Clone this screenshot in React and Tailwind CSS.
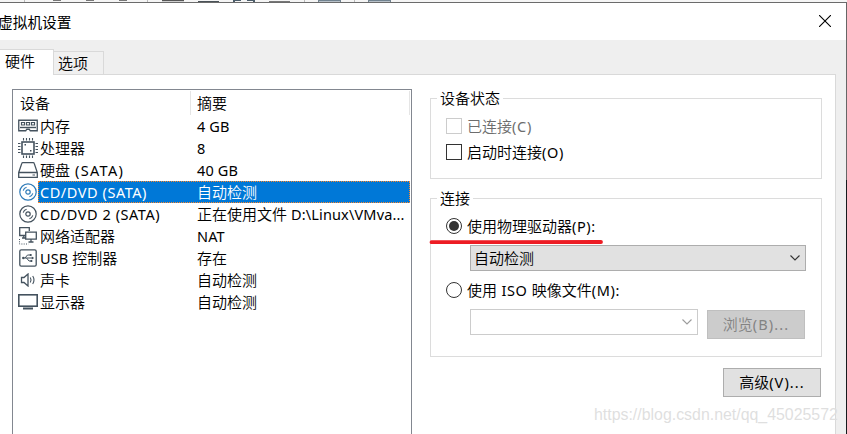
import React from "react";

const INK = "#44525e";

function MemoryIcon() {
  return (
    <svg width="20" height="14" viewBox="0 0 20 14" fill="none" stroke={INK} className="block">
      <path d="M.75 1.25h18.5v10.5h-7l-1-1.5h-2.5l-1 1.5h-7z" strokeWidth="1.3" />
      <path d="M3.5 3.5h3v2.5h-3zM8.5 3.5h3v2.5h-3zM13.5 3.5h3v2.5h-3z" strokeWidth="1.2" />
      <path d="M2 8.5h16" strokeWidth="1.4" />
    </svg>
  );
}

function CpuIcon() {
  return (
    <svg width="20" height="20" viewBox="0 0 20 20" fill="none" stroke={INK} className="block">
      <rect x="4" y="4" width="12" height="12" strokeWidth="1.6" />
      <path d="M5.5 0v2.5M8.5 0v2.5M11.5 0v2.5M14.5 0v2.5M5.5 17.5v2.5M8.5 17.5v2.5M11.5 17.5v2.5M14.5 17.5v2.5M0 5.5h2.5M0 8.5h2.5M0 11.5h2.5M0 14.5h2.5M17.5 5.5h2.5M17.5 8.5h2.5M17.5 11.5h2.5M17.5 14.5h2.5" strokeWidth="1.1" />
      <path d="M6.5 6h1.5v1.5h-1.5zM12 12h1.5v1.5H12z" fill={INK} stroke="none" />
    </svg>
  );
}

function DiskIcon() {
  return (
    <svg width="20" height="16" viewBox="0 0 20 16" fill="none" stroke={INK} strokeWidth="1.3" className="block">
      <path d="M.7 10.5 3.8 1.4Q4 .7 4.8.7h10.4q.8 0 1 .7l3.1 9.1v4.8H.7zM1 10.5h18" />
      <path d="M14.5 13H17" strokeWidth="1" />
    </svg>
  );
}

function DiscIcon({ color = INK }) {
  return (
    <svg width="18" height="18" viewBox="0 0 18 18" fill="none" stroke={color} className="block">
      <circle cx="9" cy="9" r="8.2" strokeWidth="1.2" />
      <circle cx="9" cy="9" r="2.2" strokeWidth="1.2" />
      <path d="M4.2 7.6A5 5 0 0 1 7.6 4.2M13.8 10.4A5 5 0 0 1 10.4 13.8" strokeWidth="1.1" />
    </svg>
  );
}

function NetworkIcon() {
  return (
    <svg width="18" height="18" viewBox="0 0 18 18" fill="none" stroke={INK} className="block">
      <path d="M6 8.5H.7V.7h9.6V4M3 11h4M4.8 8.5V11" strokeWidth="1.3" />
      <path d="M6.7 5.2h10.6v7H6.7zM12 12.2V15M9.5 15h5" strokeWidth="1.3" />
      <path d="M.5 12v5h9" strokeWidth="1" strokeDasharray="1 1.3" />
    </svg>
  );
}

function UsbIcon() {
  return (
    <svg width="18" height="18" viewBox="0 0 18 18" fill="none" stroke={INK} className="block">
      <rect x=".8" y=".8" width="16.4" height="16.4" rx="1.4" strokeWidth="1.3" />
      <path d="M4 9h9.5M6 9l2.5-3h2.5M7.5 9l2.5 3h2" strokeWidth="1" />
      <circle cx="4.3" cy="9" r="1.2" fill={INK} stroke="none" />
      <path d="M12.8 7.5 15.2 9l-2.4 1.5zM10.8 5.1h1.8v1.8h-1.8zM11.5 11.1h1.8v1.8h-1.8z" fill={INK} stroke="none" />
    </svg>
  );
}

function SoundIcon() {
  return (
    <svg width="16" height="14" viewBox="0 0 16 14" fill="none" stroke={INK} strokeWidth="1.3" className="block">
      <path d="M1.5 4.5H4L8 1v12L4 9.5H1.5z" />
      <path d="M10.3 4.5q1.5 2.5 0 5M12.7 3q2.6 4 0 8" strokeWidth="1.1" />
    </svg>
  );
}

function DisplayIcon() {
  return (
    <svg width="20" height="16" viewBox="0 0 20 16" fill="none" stroke={INK} className="block">
      <rect x=".8" y=".8" width="18.4" height="11.4" strokeWidth="1.6" />
      <path d="M5 14.5h10" strokeWidth="2" />
    </svg>
  );
}

const devices = [
  { icon: <MemoryIcon />, name: "内存", summary: "4 GB" },
  { icon: <CpuIcon />, name: "处理器", summary: "8" },
  { icon: <DiskIcon />, name: "硬盘 (SATA)", summary: "40 GB", spacing: "tracking-[1.3px]" },
  { icon: <DiscIcon color="#2f7bb8" />, name: "CD/DVD (SATA)", summary: "自动检测", selected: true, spacing: "tracking-[0.55px]" },
  { icon: <DiscIcon />, name: "CD/DVD 2 (SATA)", summary: "正在使用文件 D:\\Linux\\VMva...", spacing: "tracking-[0.55px]" },
  { icon: <NetworkIcon />, name: "网络适配器", summary: "NAT" },
  { icon: <UsbIcon />, name: "USB 控制器", summary: "存在" },
  { icon: <SoundIcon />, name: "声卡", summary: "自动检测" },
  { icon: <DisplayIcon />, name: "显示器", summary: "自动检测" },
];

// Latin runs are set slightly smaller than the Chinese text around them.
function Label({ children, spacing = "tracking-[0.15px]" }) {
  return children.split(/([\x20-\x7e]+)/).filter(Boolean).map((part, i) =>
    /^[\x20-\x7e]+$/.test(part) ? (
      <span key={i} className={"whitespace-pre text-[14.5px] font-normal " + spacing}>{part}</span>
    ) : (
      <span key={i}>{part}</span>
    )
  );
}

function DeviceRow({ icon, name, summary, selected, spacing }) {
  return (
    <div className="flex h-[22px] w-[397px]">
      <div className="flex w-[25px] items-center justify-center pl-[5px]">{icon}</div>
      <div
        className={
          selected
            ? "flex flex-1 items-center border border-dotted border-[#ff8728] bg-[#0078d7] pl-px text-white"
            : "flex flex-1 items-center pl-0.5"
        }
      >
        <div className="w-[157px] whitespace-nowrap"><Label spacing={spacing}>{name}</Label></div>
        <div className="whitespace-nowrap"><Label>{summary}</Label></div>
      </div>
    </div>
  );
}

function Chevron({ color }) {
  return (
    <svg width="10" height="6" viewBox="0 0 10 6" fill="none" stroke={color} strokeWidth="1.1" className="block">
      <path d="M.5.5 5 5 9.5.5" />
    </svg>
  );
}

function Radio({ checked }) {
  return (
    <span className="flex size-4 shrink-0 items-center justify-center rounded-full border border-[#333] bg-white">
      {checked && <span className="size-2.5 rounded-full bg-[#333]" />}
    </span>
  );
}

function Group({ title, className, children }) {
  return (
    <section className={"w-[392px] border border-[#dcdcdc] " + className}>
      <h2 className="-mt-[11px] ml-1.5 flex h-[22px] w-fit items-center bg-white px-[3px] pb-0.5 leading-none">{title}</h2>
      {children}
    </section>
  );
}

export default function App() {
  return (
    <div className="relative flex h-[434px] w-[847px] flex-col overflow-hidden bg-[#efefef] font-['Noto_Sans','Noto_Sans_CJK_SC',sans-serif] text-[15px] font-[350] leading-[20px] text-black">
      <div className="flex h-[3px] shrink-0 border-b border-[#6b6b6b] bg-[#f5f5f5]">
        <span className="ml-6 h-0.5 w-px bg-[#bbb]" />
        <span className="ml-7 h-px w-2 bg-[#777]" />
        <span className="ml-[25px] h-px w-2 bg-[#777]" />
        <span className="ml-[25px] h-px w-2 bg-[#777]" />
        <span className="ml-[20px] h-0.5 w-px bg-[#bbb]" />
        <span className="ml-3.5 h-0.5 w-[22px] border-t border-[#565656] bg-[#cfcfcf]" />
        <span className="ml-3.5 mt-px h-px w-[21px] bg-[#4a5258]" />
        <span className="ml-3.5 h-0.5 w-2 border-l-2 border-t border-[#4b5c69]" />
        <span className="ml-1.5 h-0.5 w-2 border-r-2 border-t border-[#4b5c69]" />
        <span className="ml-3.5 mt-px h-px w-[21px] bg-[#777]" />
        <span className="ml-3.5 h-0.5 w-px bg-[#bbb]" />
        <span className="ml-[13px] h-0.5 w-[23px] border-x border-t border-[#71828f] bg-[#b8c1c9]" />
        <span className="ml-[13px] h-0.5 w-px bg-[#bbb]" />
        <span className="ml-[13px] h-0.5 w-[23px] border-x border-t border-[#71828f] bg-[#b8c1c9]" />
      </div>

      <div className="flex min-h-0 flex-1">
        <div className="flex min-w-0 flex-1 flex-col">
          <header className="flex h-[37px] shrink-0 items-center justify-between bg-white pr-[15px]">
            <h1 className="-ml-0.5 text-[14.7px] font-normal">虚拟机设置</h1>
            <svg width="12" height="12" viewBox="0 0 12 12" stroke="#000" strokeWidth="1.1" className="-mt-0.5 block">
              <path d="m0 0 12 12M12 0 0 12" />
            </svg>
          </header>

          <nav className="flex h-[34px] shrink-0 items-end">
            <div className="z-10 -mb-px flex h-[26px] w-[54px] border-r border-t border-[#d9d9d9] bg-white pl-[5px] pt-px">硬件</div>
            <div className="flex h-[23px] w-[50px] border-r border-t border-[#d9d9d9] bg-[#f0f0f0] pl-1 pt-px">选项</div>
          </nav>

          <main className="mr-[10px] flex min-h-0 flex-1 border-r border-t border-[#d9d9d9] bg-white">
            <div className="ml-3 mt-[14px] w-[400px] shrink-0 border-x border-t border-[#828790]">
              <div className="flex h-[25px] pt-px">
                <div className="flex w-[178px] items-center border-r border-[#e5e5e5] pb-px pl-[7px]">设备</div>
                <div className="flex w-[219px] items-center border-r border-[#e5e5e5] pb-px pl-1.5">摘要</div>
              </div>
              {devices.map((d) => (
                <DeviceRow key={d.name} {...d} />
              ))}
            </div>

            <div className="ml-[18px] flex w-[392px] shrink-0 flex-col">
              <Group title="设备状态" className="mt-[23px] h-[81px]">
                <div className="mt-[5px] flex h-[22px] items-center gap-[5px] pl-[15px] text-[#6d6d6d]">
                  <span className="size-4 border border-[#ccc]" />
                  <span><Label spacing="tracking-[0.7px]">已连接(C)</Label></span>
                </div>
                <div className="mt-1 flex h-[22px] items-center gap-[5px] pl-[15px]">
                  <span className="size-4 border border-[#333]" />
                  <span><Label spacing="tracking-[0.6px]">启动时连接(O)</Label></span>
                </div>
              </Group>

              <Group title="连接" className="mt-[19px] h-[159px]">
                <div className="relative mt-[5px] flex h-[22px] items-center gap-[5px] pl-[15px]">
                  <Radio checked />
                  <span><Label spacing="tracking-[0.6px]">使用物理驱动器(P):</Label></span>
                  <svg width="174" height="6" viewBox="0 0 174 6" className="absolute -left-[2px] top-6">
                    <path d="M2.5 3.2 172 3" stroke="#ed1c24" strokeWidth="3.8" strokeLinecap="round" />
                  </svg>
                </div>
                <div className="ml-[39px] mt-2 flex h-[26px] w-[336px] items-center justify-between border border-[#adadad] bg-[#e1e1e1] pl-[3px] pr-[5px]">
                  <span>自动检测</span>
                  <Chevron color="#333" />
                </div>
                <div className="mt-2 flex h-[22px] items-center gap-[5px] pl-[15px]">
                  <Radio />
                  <span><Label spacing="tracking-[0.6px]">使用 ISO 映像文件(M):</Label></span>
                </div>
                <div className="ml-[39px] mt-2 flex items-start">
                  <div className="flex h-[26px] w-[228px] items-center justify-end border border-[#ccc] pr-[5px]">
                    <Chevron color="#9c9c9c" />
                  </div>
                  <button className="ml-[9px] mt-px flex h-[29px] w-[98px] items-center justify-center border border-[#bfbfbf] bg-[#ccc] pb-px text-[#838383]">
                    <Label spacing="tracking-[1.1px]">浏览(B)...</Label>
                  </button>
                </div>
              </Group>

              <button className="ml-auto mr-px mt-[11px] flex h-[29px] w-[98px] items-center justify-center border border-[#adadad] bg-[#e1e1e1] pb-px">
                <Label spacing="tracking-[1.1px]">高级(V)...</Label>
              </button>
            </div>
          </main>
        </div>

        <div className="flex w-px flex-col">
          <div className="h-[177px] bg-[#666]" />
          <div className="flex-1 bg-[#161a1d]" />
        </div>
      </div>

      <div className="absolute left-[594px] top-[405px] whitespace-nowrap font-['Liberation_Sans',sans-serif] text-[15.9px] font-normal leading-5 text-[#dfdfdf]">
        https://blog.csdn.net/qq_45025572
      </div>
    </div>
  );
}
